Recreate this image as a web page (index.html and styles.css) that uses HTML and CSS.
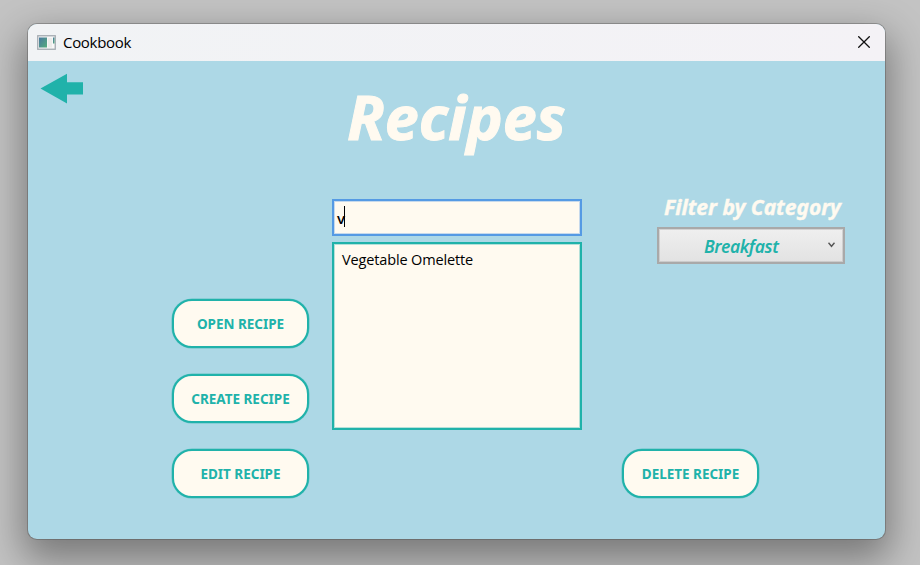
FILE: index.html
```html
<!DOCTYPE html>
<html lang="en">
<head>
<meta charset="utf-8">
<title>Cookbook</title>
<link rel="stylesheet" href="styles.css">
</head>
<body>
<main class="window">
  <header class="titlebar">
    <svg class="app-icon" width="19" height="16" viewBox="0 0 19 16">
      <defs><linearGradient id="pane" x1="0" y1="0" x2="1" y2="1"><stop offset="0" stop-color="#4a78a0"/><stop offset="1" stop-color="#55ad7c"/></linearGradient></defs>
      <rect x=".75" y=".75" width="17.500" height="13.500" fill="#f7f7f7" stroke="#a4abb1" stroke-width="1.300"/>
      <rect x="2" y="2.500" width="8" height="10" fill="url(#pane)"/>
      <rect x="11" y="3" width="4" height="9.500" fill="#ececea"/>
      <rect x="16" y="2.500" width="1.500" height="6" fill="url(#pane)"/>
    </svg>
    <span class="app-name">Cookbook</span>
    <svg class="close" width="12" height="12" viewBox="0 0 12 12"><path d="M.3.300l11.400 11.400M11.700.300L.3 11.700" stroke="#111" stroke-width="1.300"/></svg>
  </header>
  <section class="content">
    <div class="heading">
      <svg class="back" width="43" height="31" viewBox="0 0 43 31"><path d="M.5 15.500L27 .700V9.300H43V21.500H27V30.500Z" fill="#20b2aa"/></svg>
      <h1>Recipes</h1>
    </div>
    <div class="columns">
      <nav class="actions">
        <button class="btn">OPEN RECIPE</button>
        <button class="btn">CREATE RECIPE</button>
        <button class="btn">EDIT RECIPE</button>
      </nav>
      <div class="results">
        <div class="search"><span>v</span><i class="caret"></i></div>
        <div class="list"><span>Vegetable Omelette</span></div>
      </div>
      <div class="side">
        <div class="filter">
          <h2>Filter by Category</h2>
          <div class="select"><span>Breakfast</span>
            <svg class="chevron" width="7" height="6" viewBox="0 0 7 6"><path d="M.5.800L3.500 4.300L6.500.800" fill="none" stroke="#555" stroke-width="1.400"/></svg>
          </div>
        </div>
        <button class="btn">DELETE RECIPE</button>
      </div>
    </div>
  </section>
</main>
</body>
</html>
```
FILE: styles.css
```css
* { box-sizing: border-box; }
body {
  margin: 0;
  height: 565px;
  overflow: hidden;
  padding: 24px 35px 26px 28px;
  background: #c3c3c3;
  font-family: "Open Sans", "Noto Sans", sans-serif;
}
.window {
  height: 515px;
  border-radius: 9px;
  background: #add8e6;
  box-shadow: 0 0 0 1px rgba(80, 80, 80, .4), 0 16px 38px 5px rgba(0, 0, 0, .38);
}
.titlebar {
  height: 37px;
  display: flex;
  align-items: center;
  padding: 0 15px 0 9px;
  border-radius: 9px 9px 0 0;
  background: linear-gradient(90deg, #f1f3f5, #f4f2f6);
}
.app-name { margin: -2px 0 0 7px; font-size: 15px; line-height: 20px; color: #000; letter-spacing: -.3px; }
.close { margin: -1px 0 0 auto; }
.content { height: 478px; }
.heading { display: flex; height: 138px; padding: 12px 0 0 12px; }
.back { flex: none; }
h1 {
  margin: 0 0 0 264px;
  font: italic bold 61px/84px "Noto Sans", sans-serif;
  letter-spacing: 0;
  -webkit-text-stroke: 1px #fffaf0;
  color: #fffaf0;
  padding-top: 2px;
}
.columns { display: flex; height: 299px; padding-left: 144px; }
.actions { display: flex; flex-direction: column; gap: 26px; justify-content: flex-end; }
.btn {
  width: 137px;
  height: 49px;
  padding: 0;
  display: flex;
  align-items: center;
  justify-content: center;
  border: 2px solid #20b2aa;
  border-radius: 20px;
  box-shadow: 0 0 0 .5px #20b2aa88;
  background: #fffaf0;
  color: #20b2aa;
  font: bold 13.500px/18px "Noto Sans", sans-serif;
  letter-spacing: -.02px;
  white-space: nowrap;
}
.results { width: 250px; height: 231px; margin-left: 23px; display: flex; flex-direction: column; gap: 6px; }
.search {
  height: 37px;
  display: flex;
  align-items: center;
  padding-left: 3px;
  border: 2px solid #559ae4;
  box-shadow: inset 0 0 0 1px #559ae455;
  background: #fffaf0;
  font-size: 15px;
  font-weight: 600;
}
.search span { margin-right: -1px; }
.caret { width: 1px; height: 21px; margin-top: -2px; background: #000; }
.list {
  flex: 1;
  padding: 6px 8px;
  border: 2px solid #20b2aa;
  box-shadow: inset 0 0 0 1px #20b2aa55;
  background: #fffaf0;
  font-size: 14.500px;
  line-height: 20px;
  letter-spacing: -.14px;
}
.side { width: 223px; margin-left: 40px; display: flex; flex-direction: column; justify-content: space-between; }
.filter { width: 188px; margin-left: 35px; }
h2 {
  margin: -6px 0 5px 7px;
  font: italic bold 21px/29px "Noto Sans", sans-serif;
  letter-spacing: 0;
  -webkit-text-stroke: .4px #fffaf0;
  color: #fffaf0;
  white-space: nowrap;
}
.select {
  height: 37px;
  display: flex;
  align-items: center;
  justify-content: space-between;
  padding: 0 8px 0 45px;
  border: 2px solid #a9a9a9;
  box-shadow: inset 0 0 0 1px #a9a9a966;
  background: linear-gradient(#efefef, #e2e2e2);
  font: italic 600 17.500px/24px "Noto Sans", sans-serif;
  color: #20b2aa;
  letter-spacing: -.35px;
}
.chevron { margin-top: -1px; }
```
